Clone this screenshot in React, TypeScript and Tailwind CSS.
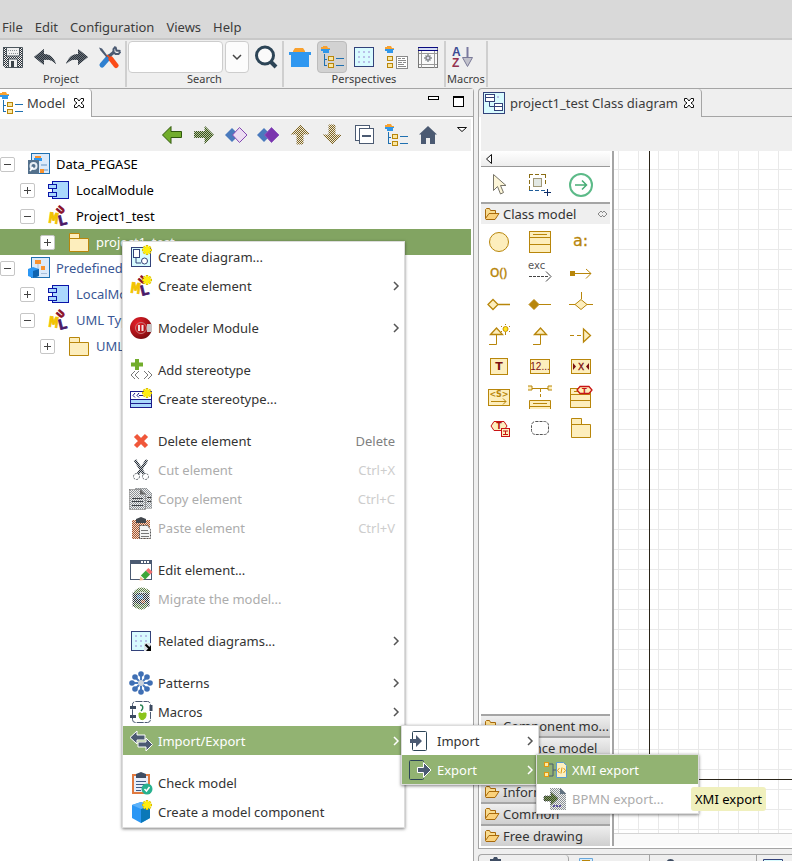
import React from "react";
import type { ReactNode } from "react";

const GOLD = "#b8860b";
const CREAM = "#fdeebd";
const SLATE = "#4b5a72";

/* ---------- icon helpers ---------- */

function Icon({ children, size = 24 }: { children: ReactNode; size?: number }) {
  return (
    <svg width={size} height={size} viewBox={`0 0 ${size} ${size}`} className="shrink-0" fill="none" aria-hidden="true">
      {children}
    </svg>
  );
}

function Dither({ id, color }: { id: string; color: string }) {
  return (
    <pattern id={id} width="2" height="2" patternUnits="userSpaceOnUse">
      <g shapeRendering="crispEdges">
        <rect width="1" height="1" fill={color} />
        <rect x="1" y="1" width="1" height="1" fill={color} />
      </g>
    </pattern>
  );
}

function Patterns() {
  return (
    <svg width="0" height="0" className="absolute" aria-hidden="true">
      <defs>
        <Dither id="dDark" color="#2b3138" />
        <Dither id="dGray" color="#8b9196" />
        <Dither id="dGreen" color="#37501c" />
        <Dither id="dBrown" color="#7d6426" />
        <Dither id="dRust" color="#a8562c" />
        <Dither id="dBlue" color="#2f6b9c" />
        <Dither id="dLeaf" color="#5f8040" />
        <radialGradient id="ball" cx="0.35" cy="0.3" r="0.8">
          <stop offset="0" stopColor="#e8202a" />
          <stop offset="0.6" stopColor="#a81218" />
          <stop offset="1" stopColor="#6d0a0e" />
        </radialGradient>
      </defs>
    </svg>
  );
}

function Star({ x, y }: { x: number; y: number }) {
  return (
    <g transform={`translate(${x} ${y})`}>
      <path d="M0-5V5M-5 0H5M-3.5-3.5L3.5 3.5M-3.5 3.5L3.5-3.5" stroke="#d9be00" strokeWidth="2.4" />
      <path d="M0-4V4M-4 0H4M-3-3L3 3M-3 3L3-3" stroke="#ffee10" strokeWidth="2" />
      <circle r="2.5" fill="#ffee10" />
    </g>
  );
}

function Pot({ x = 0, y = 0 }: { x?: number; y?: number }) {
  return (
    <g transform={`translate(${x} ${y})`}>
      <path d="M2 0h4l1 2h2v1H0V1h2z" fill="#f9a12e" />
      <path d="M0 3h9v1H8v3H2V5H0z" fill="#2f97ea" />
    </g>
  );
}

function TreeGlyph() {
  return (
    <Icon>
      <Pot x={1} y={1} />
      <g shapeRendering="crispEdges">
        <path d="M4.500 9v12M4 14.500h3M4 20.500h3M16 13.500h8M16 20.500h8" stroke="#1f70b0" />
        <rect x="8.500" y="11.500" width="5" height="4" fill="#fbe7a0" stroke={GOLD} />
        <rect x="8.500" y="18.500" width="5" height="4" fill="#fbe7a0" stroke={GOLD} />
      </g>
    </Icon>
  );
}

/* ---------- main toolbar icons ---------- */

const SaveIcon = () => (
  <Icon>
    <path fillRule="evenodd" fill="url(#dDark)" d="M2 2h20v21H4l-2-2zM6 3v8h12V3zM7 14v8h10v-8z" />
    <path d="M2.500 2.500h19v20h-17l-2-2zM5.500 3v8h13V3M7.500 22v-8h9v8" stroke="#4b555c" />
    <path d="M7 5.500h10M7 8.500h10" stroke="url(#dGray)" />
    <path d="M10 16h3v6h-3z" fill="#3a4248" />
  </Icon>
);
const UndoIcon = () => (
  <Icon>
    <path d="M1 12L11 4v5c6 0 10 4 12 10-4-4-7-5-12-4v5z" fill="#68717a" />
    <path d="M1 12L11 4v5c6 0 10 4 12 10-4-4-7-5-12-4v5z" fill="url(#dDark)" />
  </Icon>
);
const RedoIcon = () => (
  <Icon>
    <path d="M23 12L13 4v5C7 9 3 13 1 19c4-4 7-5 12-4v5z" fill="#68717a" />
    <path d="M23 12L13 4v5C7 9 3 13 1 19c4-4 7-5 12-4v5z" fill="url(#dDark)" />
  </Icon>
);
const ToolsIcon = () => (
  <Icon>
    <path d="M5 20l7-8" stroke="#2f80d0" strokeWidth="5" strokeLinecap="round" />
    <path d="M11 12l6-5" stroke={SLATE} strokeWidth="3" />
    <path d="M18.500 1.500l-2 2.500v3l2 2h3l2-2.500M18.500 2l1 3.500 4 .5" stroke={SLATE} strokeWidth="2" />
    <path d="M2 2.500l3 1 6 8-1.500 1-6-7z" fill={SLATE} />
    <path d="M14 14l5 6.500" stroke="#fb4b18" strokeWidth="5" strokeLinecap="round" />
    <path d="M10 10l4 4" stroke="#fb4b18" strokeWidth="1.500" />
  </Icon>
);
const SearchIcon = () => (
  <Icon>
    <path d="M16 16l6 6" stroke="#2c4456" strokeWidth="4" />
    <circle cx="11" cy="10.500" r="8.500" fill="#fafafa" stroke="#2c4456" strokeWidth="3" />
  </Icon>
);
const BasketIcon = () => (
  <Icon>
    <path d="M7 3h8l2 3v2H5V6z" fill="#f9a12e" />
    <path d="M1 7h22v3h-2v12H3V10H1z" fill="#2f97f0" />
  </Icon>
);
const GridIcon = ({ arrow = false }: { arrow?: boolean }) => (
  <Icon>
    <rect x="2.500" y="2.500" width="19" height="19" fill="#d8fbff" stroke="#33427a" />
    {[6, 11, 16].map((y) => [6, 11, 16].map((x) => <rect key={`${x}-${y}`} x={x} y={y} width="2" height="2" fill="#b9c1e8" />))}
    {arrow && (
      <>
        <path d="M15 14h7v8h-7z" fill="#dcdfe6" />
        <path d="M16.500 15.500l3.500 3.500" stroke="#000" strokeWidth="2" />
        <path d="M22 16v6h-5z" fill="#000" />
      </>
    )}
  </Icon>
);
const TreeDocIcon = () => (
  <Icon>
    <Pot x={1} y={1} />
    <rect x="3.500" y="11.500" width="5" height="4" fill="#fbe7a0" stroke={GOLD} />
    <rect x="3.500" y="18.500" width="5" height="4" fill="#fbe7a0" stroke={GOLD} />
    <rect x="12.500" y="11.500" width="11" height="12" fill="#fff" stroke="#8a8a8a" />
    <path d="M14 13.500h3m1 0h3M14 15.500h8M14 17.500h4m1 0h3M14 19.500h6M14 21.500h8" stroke="#8a8a8a" />
  </Icon>
);
const WindowIcon = () => (
  <Icon>
    <rect x="2.500" y="2.500" width="19" height="20" fill="#fafafa" stroke="#777" />
    <path d="M5.500 6v17M18.500 6v17M3 19.500h18M3 8.500h18" stroke="#999" />
    <path d="M3 3h18v2H3z" fill="#d4dcf4" />
    <path d="M2 2.500h20M2 5.500h20" stroke="#0b0b80" />
    <path d="M12 9v8M8 13h8M9.500 10.500l5 5M9.500 15.500l5-5" stroke="#8b9298" strokeWidth="1.500" />
    <circle cx="12" cy="13" r="2" fill="#dde" stroke="#777" />
  </Icon>
);
const SortIcon = () => (
  <Icon>
    <text x="2" y="11" fontSize="12" fontWeight="700" fontFamily="Liberation Sans" fill="#3b4b94">A</text>
    <text x="2" y="22" fontSize="12" fontWeight="700" fontFamily="Liberation Sans" fill="#93304e">Z</text>
    <path d="M17.500 2v11" stroke="#7a7aa0" strokeWidth="2" />
    <path d="M12.500 12.500h10l-5 9z" fill="#c2c2cc" stroke="#7a7a98" />
  </Icon>
);

/* ---------- model view icons ---------- */

const BackIcon = () => (
  <Icon>
    <path d="M2.500 12L11 3.500v5h10.500v6H11v6z" fill="#72ad2c" stroke="#31590d" />
  </Icon>
);
const ForwardIcon = () => (
  <Icon>
    <path d="M21.500 12L13 3.500v5H2.500v6H13v6z" fill="#b4c49b" />
    <path d="M21.500 12L13 3.500v5H2.500v6H13v6z" fill="url(#dGreen)" stroke="url(#dGreen)" />
  </Icon>
);
const DiamondsIcon = ({ filled = false }: { filled?: boolean }) => (
  <Icon>
    <path d="M1 12l7-7 7 7-7 7z" fill="#4a7abd" />
    <path d="M8.500 12L15.500 4.500 23 12l-7.500 7.500z" fill={filled ? "#7b35ae" : "#ecdcf2"} stroke={filled ? "#8f5ac0" : "#8247b2"} />
  </Icon>
);
const UpIcon = () => (
  <Icon>
    <path d="M12 2L3 11h6v10h6V11h6z" fill="#f0ead6" />
    <path d="M12 2L3 11h6v10h6V11h6z" fill="url(#dBrown)" stroke="url(#dBrown)" />
  </Icon>
);
const DownIcon = () => (
  <Icon>
    <path d="M12 21l-9-9h6V2h6v10h6z" fill="#f0ead6" />
    <path d="M12 21l-9-9h6V2h6v10h6z" fill="url(#dBrown)" stroke="url(#dBrown)" />
  </Icon>
);
const CollapseIcon = () => (
  <Icon>
    <rect x="3.500" y="2.500" width="14" height="15" fill="#fff" stroke={SLATE} />
    <rect x="7.500" y="5.500" width="14" height="15" fill="#fff" stroke={SLATE} />
    <path d="M10 13h9" stroke={SLATE} strokeWidth="2" />
  </Icon>
);
const HomeIcon = () => (
  <Icon>
    <path d="M12 3l9 8.500h-2V21h-5v-6h-4v6H5v-9.500H3z" fill={SLATE} />
  </Icon>
);
const ProjectIcon = ({ cube = false }: { cube?: boolean }) => (
  <Icon>
    <rect x="4.500" y="1.500" width="18" height="20" fill="#dceafa" stroke="#1f70b0" />
    {cube ? (
      <>
        <path d="M8 4h6v4H8zM14 10h4v4h-4z" fill="#f9922e" />
        <path d="M11 8v5M14 17.500h6" stroke="#a7bdd8" />
        <path d="M1 13l5-2 6 2v7l-6 2-5-2z" fill="#2b97f5" />
        <path d="M6 15l6-2v7l-6 2z" fill="#0e63b0" />
      </>
    ) : (
      <>
        <path d="M8 4h6v2H8zM13 17h4v4h-4z" fill="#f9922e" />
        <path d="M7 6h8v3H7z" fill="#2b97f0" />
        <path d="M14 13h6M17 18h4" stroke="#9fbfe0" strokeWidth="2" />
        <path d="M1 8h11v14H1z" fill="#53708c" />
        <circle cx="6.500" cy="14" r="3" fill="#53708c" stroke="#e8eef5" strokeWidth="2" />
        <path d="M6 15l-3 4" stroke="#fff" strokeWidth="1.500" />
      </>
    )}
  </Icon>
);
const ModuleIcon = () => (
  <Icon>
    <rect x="5.500" y="3.500" width="16" height="17" fill="#abd8fd" stroke="#0a14a8" />
    <rect x="1.500" y="6.500" width="8" height="4" fill="#abd8fd" stroke="#0a14a8" />
    <rect x="1.500" y="14.500" width="8" height="4" fill="#abd8fd" stroke="#0a14a8" />
  </Icon>
);
const UmlIcon = ({ star = false }: { star?: boolean }) => (
  <Icon>
    <g fontFamily="Liberation Mono" fontWeight="700" strokeWidth="0.800">
      <text x="10" y="10" fontSize="11" fill="#8c1028" stroke="#8c1028" transform="rotate(-50 13 6)">U</text>
      <text x="2" y="19" fontSize="16" fill="#f2c200" stroke="#f2c200" transform="rotate(8 6 14)">M</text>
      <text x="11" y="21" fontSize="15" fill="#4a1a68" stroke="#4a1a68" transform="rotate(-14 16 16)">L</text>
    </g>
    {star && <Star x={18} y={6} />}
  </Icon>
);
const FolderIcon = () => (
  <Icon>
    <path d="M2.500 21.500v-18h10v5h9v13z" fill={CREAM} stroke={GOLD} />
    <path d="M3 8.500h10" stroke={GOLD} />
  </Icon>
);

/* ---------- context menu icons ---------- */

const CreateDiagramIcon = () => (
  <Icon>
    <rect x="2.500" y="2.500" width="19" height="19" fill="#d8fbff" stroke="#33427a" />
    <path d="M7 12v6h5" stroke="#33427a" />
    <rect x="4.500" y="4.500" width="6" height="8" fill="#fff" stroke="#33427a" />
    <circle cx="15.500" cy="16" r="3" fill="#fff" stroke="#33427a" />
    <Star x={18} y={5} />
  </Icon>
);
const ModelerIcon = () => (
  <Icon>
    <circle cx="12" cy="12" r="11" fill="url(#ball)" />
    <path d="M18 8h5v8h-5z" fill="#c9c3c3" />
    <circle cx="12" cy="12" r="5.500" stroke="#c87a7c" />
    <path d="M9 9h2v6H9zM12.500 9h2v6h-2z" fill="#f2e2e2" />
  </Icon>
);
const AddStereoIcon = () => (
  <Icon>
    <path d="M8 1v11M2 6.500h12" stroke="#72ad2c" strokeWidth="4" />
    <path d="M6 13l-4 4 4 4M10 13l-4 4 4 4M15 13l4 4-4 4M19 13l4 4-4 4" stroke="#777" />
  </Icon>
);
const CreateStereoIcon = () => (
  <Icon>
    <rect x="1.500" y="4.500" width="21" height="16" fill="#fff" stroke="#1c1c8c" />
    <path d="M2 13h20v7H2z" fill="#a9d8fc" />
    <path d="M1 12.500h22M1 16.500h22" stroke="#1c1c8c" />
    <path d="M6 6l-2 2.500 2 2M10 6L8 8.500l2 2M10 8.500h4" stroke="#1c1c8c" />
    <Star x={18} y={6} />
  </Icon>
);
const DeleteIcon = () => (
  <Icon>
    <path d="M6.500 6.500l11 11M17.500 6.500l-11 11" stroke="#f0573a" strokeWidth="4.500" />
  </Icon>
);
const CutIcon = () => (
  <Icon>
    <path d="M6 2l9 14M18 2L9 16" stroke="#c3c8cd" strokeWidth="2.500" />
    <path d="M6 2l9 14M18 2L9 16" stroke="url(#dDark)" strokeWidth="3" />
    <circle cx="7.500" cy="18.500" r="3" stroke="#5b6166" strokeDasharray="2 1" />
    <circle cx="16.500" cy="18.500" r="3" stroke="#5b6166" strokeDasharray="2 1" />
  </Icon>
);
const CopyIcon = () => (
  <Icon>
    <path d="M6.500 1.500h11l5 5v15h-16z" fill="#f0f0f0" stroke="#888" strokeDasharray="1 1" />
    <path d="M6 1h12l5 5v15H6z" fill="url(#dGray)" />
    <path d="M18 10.500h4M18 14.500h4" stroke="#444" />
    <path d="M.5 2.500h11l5 5v15H.5z" fill="#f0f0f0" stroke="#555" strokeDasharray="1 1" />
    <path d="M1 3h10l5 5v14H1z" fill="url(#dGray)" />
    <path d="M11 2.500v5h5.500z" fill="#666" />
    <path d="M3 11.500h11M3 14.500h11M3 18.500h11" stroke="#3c4046" />
  </Icon>
);
const PasteIcon = () => (
  <Icon>
    <path d="M3 4h18v19H3z" fill="#efd8cb" />
    <path d="M3 4h18v19H3z" fill="url(#dRust)" />
    <path d="M7 3l5-2 5 2v4H7z" fill="#42474d" />
    <path d="M10.500 9.500h8l3 4v9h-11z" fill="#f4f4f4" stroke="#555" strokeDasharray="2 1" />
    <path d="M12 14.500h7M12 17.500h8M12 20.500h8" stroke="#777" />
  </Icon>
);
const EditIcon = () => (
  <Icon>
    <rect x="1.500" y="2.500" width="21" height="19" fill="#fff" stroke={SLATE} />
    <path d="M1 2h22v4H1z" fill={SLATE} />
    <path d="M12 4h2m1 0h2m1 0h2" stroke="#fff" strokeWidth="2" />
    <path d="M14 19.500l5-5" stroke="#3da63a" strokeWidth="6" />
    <path d="M19 14.500l2.500-2.500" stroke="#f0706e" strokeWidth="6" />
    <path d="M10.500 22.500l1-4 3.500 3.500z" fill="#f4b98c" />
  </Icon>
);
const MigrateIcon = () => (
  <Icon>
    <path d="M5 4c4-4 10-4 14 0v15c-4 4-10 4-14 0z" fill="#dfe6e8" />
    <path d="M5 6h14v13c-4 4-10 4-14 0z" fill="url(#dDark)" />
    <path d="M4 6c4-7 12-7 17-2l-1 4c-4-4-10-4-14 0zM19 18c-4 7-10 5-15 1l1-5c3 4 9 5 13 1z" fill="url(#dLeaf)" />
    <path d="M4.500 5.500v14M19.500 5.500v14" stroke="url(#dDark)" strokeWidth="2" />
    <path d="M8 8h6v4H8z" fill="url(#dBlue)" />
    <path d="M12 13h4v3h-4z" fill="url(#dRust)" />
  </Icon>
);
const PatternsIcon = () => (
  <Icon>
    <path d="M12 2v20M2 12h20M5 5l14 14M19 5L5 19" stroke="#4a7abd" strokeWidth="2" />
    {[[12, 3], [12, 21], [3, 12], [21, 12], [6, 6], [18, 6], [6, 18], [18, 18]].map(([x, y]) => (
      <circle key={`${x}-${y}`} cx={x} cy={y} r="2.800" fill="#3f6fb4" />
    ))}
    <circle cx="12" cy="12" r="3" fill="#ccd3dd" />
  </Icon>
);
const MacrosIcon = () => (
  <Icon>
    <rect x="3.500" y="1.500" width="18" height="21" rx="3" fill="#fff" stroke={SLATE} strokeDasharray="7 1" />
    <path d="M1 7.500h6M1 16.500h6M22 5v6" stroke="#3c4a60" strokeWidth="3" />
    <path d="M11 5c3 0 4 3 1 6" stroke="#268050" strokeWidth="1.500" />
    <path d="M10 13h2l1 1 1-1h3c1 8-7 9-7 2z" fill="#8bc51c" stroke="#8bc51c" />
  </Icon>
);
const TransferIcon = () => (
  <Icon>
    <path d="M1 8.500L8 2v4h8v5H8v4z" fill={SLATE} stroke="#fff" />
    <path d="M23.500 15.500L17 9v4h-8v5h8v4z" fill={SLATE} stroke="#fff" />
  </Icon>
);
const CheckModelIcon = () => (
  <Icon>
    <rect x="4" y="4" width="16" height="18" fill="#e7eefb" stroke="#e07a40" strokeWidth="2" />
    <path d="M7 3l5-2 5 2v4H7z" fill="#3f4d63" />
    <path d="M7 10.500h10M7 13.500h9M7 16.500h6M7 19.500h5" stroke="#3f5d85" />
    <circle cx="18" cy="18" r="5.500" fill="#28b18f" />
    <path d="M15.500 18l2 2 3-4" stroke="#fff" strokeWidth="1.500" />
  </Icon>
);
const ComponentIcon = () => (
  <Icon>
    <path d="M3 5l9-3 9 3v13l-9 5-9-5z" fill="#2b97f5" />
    <path d="M12 9l9-4v13l-9 5z" fill="#0b78b8" />
    <path d="M3 5l9-3 9 3-9 4z" fill="#5bb2fa" />
    <Star x={18} y={5} />
  </Icon>
);
const ImportIcon = () => (
  <Icon>
    <rect x="4.500" y="2.500" width="14" height="19" rx="1" fill="#fff" stroke="#2c4456" />
    <path d="M2 10h6V6l6 6-6 6v-4H2z" fill={SLATE} />
  </Icon>
);
const ExportIcon = () => (
  <Icon>
    <rect x="1.500" y="2.500" width="14" height="19" rx="1" stroke="#2c4456" />
    <path d="M9.500 9.500h6v-5l7.500 7.500-7.500 7.500v-5h-6z" fill={SLATE} stroke="#fff" />
  </Icon>
);
const XmiIcon = () => (
  <Icon>
    <path d="M6 6h4v12H6M10 12h3" stroke={SLATE} />
    <rect x="1.500" y="4.500" width="4" height="4" fill="#ffe9a0" stroke="#e09a10" />
    <rect x="1.500" y="14.500" width="4" height="4" fill="#ffe9a0" stroke="#e09a10" />
    <path d="M13.500 4.500h7l3 3v12h-10z" fill="#fdf0c0" stroke="#5a9ad0" />
    <path d="M16.500 10l-2 2.500 2 2.500M20.500 10l2 2.500-2 2.500M19 9.500l-1 6" stroke="#e09a10" />
  </Icon>
);
const BpmnIcon = () => (
  <Icon>
    <path d="M7 1h11l5 5v17H7z" fill="#f0f0f0" />
    <path d="M7 1h11l5 5v17H7z" fill="url(#dGray)" />
    <path d="M17 1v6h6z" fill="#617282" />
    <path d="M1 9h7V5l7 6.500L8 18v-4H1z" fill="#86966c" />
    <path d="M1 9h7V5l7 6.500L8 18v-4H1z" fill="url(#dGreen)" stroke="url(#dDark)" />
    <path d="M10 19h9" stroke="#5c4fa0" strokeWidth="2" strokeDasharray="2 1" />
  </Icon>
);

/* ---------- editor and palette icons ---------- */

const ClassDiagramIcon = () => (
  <Icon>
    <rect x="1.500" y="1.500" width="21" height="21" fill="#d8fbff" stroke="#33427a" />
    <path d="M7.500 10v5.500h5" stroke="#33427a" />
    <rect x="3.500" y="3.500" width="9" height="7" fill="#fff" stroke="#33427a" />
    <rect x="12.500" y="12.500" width="8" height="7" fill="#fff" stroke="#33427a" />
    <path d="M3 6.500h9M12 15.500h8" stroke="#33427a" />
    <path d="M15 5h2v2h-2z" fill="#b9c1e8" />
  </Icon>
);
const CloseIcon = () => (
  <svg width="12" height="12" viewBox="0 0 12 12" className="shrink-0" fill="#fff" stroke="#111" aria-hidden="true">
    <path d="M1.500 1.500h2.500l2 2.500 2-2.500h2.500v2.500L8 6l2.500 2v2.500H8L6 8l-2 2.500H1.500V8L4 6 1.500 4z" />
  </svg>
);

const PointerIcon = () => (
  <Icon>
    <path d="M6.500 1.500v16l4-4 3 7.500 3-1.500-3-7h5.500z" fill="#fdf6d8" stroke="#777468" />
  </Icon>
);
const MarqueeIcon = () => (
  <Icon>
    <path d="M1 1.500h17M1.500 1v16M17.500 1v12" stroke="#8a6d14" strokeDasharray="4 2" />
    <path d="M1 17.500h16" stroke="#1f5c98" strokeDasharray="4 2" />
    <rect x="5.500" y="5.500" width="8" height="8" fill="#e2e8e4" stroke="#a09878" />
    <path d="M19.500 16v7M16 19.500h7" stroke="#0b2a66" />
  </Icon>
);
const LinkIcon = () => (
  <Icon>
    <circle cx="12" cy="12" r="11" stroke="#5cba88" strokeWidth="2" />
    <path d="M6 12h11M13 7.500l4.500 4.500-4.500 4.500" stroke="#48ad76" strokeWidth="1.500" />
  </Icon>
);

const paletteIcons: { name: string; art: ReactNode }[] = [
  { name: "Interface", art: <circle cx="12" cy="12" r="9.500" fill={CREAM} stroke={GOLD} /> },
  {
    name: "Class",
    art: (
      <g stroke={GOLD}>
        <rect x="1.500" y="1.500" width="21" height="21" fill={CREAM} />
        <path d="M5 4.500h14M2 7.500h20M2 14.500h20" />
      </g>
    ),
  },
  { name: "Attribute", art: <text x="4" y="16" fontSize="16" fontFamily="DejaVu Sans" fill={GOLD} stroke={GOLD} strokeWidth="0.300">a:</text> },
  { name: "Operation", art: <text x="3" y="16" fontSize="12" fontFamily="Noto Sans" fontWeight="500" fill={GOLD} stroke={GOLD} strokeWidth="0.300">O()</text> },
  {
    name: "Exception",
    art: (
      <g stroke="#444">
        <text x="0" y="8" fontSize="10" fontFamily="DejaVu Sans" fill="#555" stroke="none">exc</text>
        <path d="M1 15.500h19" strokeDasharray="3 1" />
        <path d="M18 10.500l5 5-5 5" />
      </g>
    ),
  },
  {
    name: "Association",
    art: (
      <g stroke={GOLD}>
        <rect x="1.500" y="10.500" width="4" height="4" fill={GOLD} />
        <path d="M6 12.500h16M17 8l5 4.500-5 5" />
      </g>
    ),
  },
  { name: "Aggregation", art: <path d="M1 12.500l5-5 5 5-5 5zM11 12.500h12" fill={CREAM} stroke={GOLD} strokeWidth="1.300" /> },
  { name: "Composition", art: <path d="M1 12.500l5-5 5 5-5 5zM11 12.500h12" fill={GOLD} stroke={GOLD} /> },
  { name: "N-ary association", art: <path d="M0 12.500h6l6-5 6 5-6 5-6-5M18 12.500h6M12.500 0v7" fill={CREAM} stroke={GOLD} /> },
  {
    name: "Smart inheritance",
    art: (
      <g stroke={GOLD}>
        <path d="M9.500 11v10.500H2" />
        <path d="M3.500 11.500l6-6.500 6 6.500z" fill={CREAM} strokeWidth="1.300" />
        <circle cx="18.500" cy="6" r="2.500" fill="#ffe820" stroke="#c8900b" />
        <path d="M18.500 9v3M14 3l1 1M23 3l-1 1M18.500 1v1M14 9l1-1M23 9l-1-1" />
      </g>
    ),
  },
  {
    name: "Generalization",
    art: (
      <g stroke={GOLD}>
        <path d="M12.500 11v10.500H5" />
        <path d="M6.500 11.500l6-6.500 6 6.500z" fill={CREAM} strokeWidth="1.300" />
      </g>
    ),
  },
  {
    name: "Realization",
    art: (
      <g stroke={GOLD}>
        <path d="M1 12.500h12" strokeDasharray="4 3" />
        <path d="M14.500 6l7 6.500-7 6.500z" fill={CREAM} strokeWidth="1.300" />
      </g>
    ),
  },
  {
    name: "Template parameter",
    art: (
      <g>
        <rect x="3.500" y="4.500" width="17" height="16" fill={CREAM} stroke={GOLD} />
        <text x="12" y="16" fontSize="11" fontWeight="700" textAnchor="middle" fontFamily="DejaVu Sans" fill="#7c1010">T</text>
      </g>
    ),
  },
  {
    name: "Enumeration literal",
    art: (
      <g>
        <rect x="2.500" y="5.500" width="19" height="14" fill={CREAM} stroke={GOLD} />
        <text x="12" y="16" fontSize="10" textAnchor="middle" fontFamily="Liberation Sans" fill="#7c1010">12...</text>
      </g>
    ),
  },
  {
    name: "Enumeration",
    art: (
      <g>
        <rect x="2.500" y="5.500" width="19" height="14" fill={CREAM} stroke={GOLD} />
        <text x="12" y="16" fontSize="9" textAnchor="middle" fontFamily="DejaVu Sans" fill="#7c1010" stroke="#7c1010" strokeWidth="0.300">X</text>
        <path d="M4 9l3 3.500-3 3.500zM20 9l-3 3.500 3 3.500z" fill="#7c1010" />
      </g>
    ),
  },
  {
    name: "Signal",
    art: (
      <g stroke={GOLD}>
        <rect x="1.500" y="4.500" width="21" height="16" fill={CREAM} />
        <text x="12" y="12" fontSize="8" fontWeight="700" textAnchor="middle" fontFamily="DejaVu Sans" fill={GOLD} stroke="none">&lt;S&gt;</text>
        <path d="M4 16.500h15M16 13.500l3 3-3 3" />
      </g>
    ),
  },
  {
    name: "Association class",
    art: (
      <g stroke={GOLD}>
        <path d="M0 3.500h24" />
        <path d="M0 1h4v4H0M24 1h-4v4h4" fill={CREAM} />
        <path d="M12.500 4v10" strokeDasharray="3 2" />
        <path d="M1.500 24v-8.500h21V24" fill={CREAM} />
        <path d="M5 18.500h14M2 21.500h20" />
      </g>
    ),
  },
  {
    name: "Parameterized class",
    art: (
      <g stroke={GOLD}>
        <rect x="1.500" y="3.500" width="20" height="19" fill={CREAM} />
        <path d="M2 9.500h20M2 15.500h20M5 6.500h4" />
        <path d="M11 1.500h9l3 3.500-3 3.500h-9L8 5z" fill={CREAM} stroke="#c81414" strokeWidth="1.300" />
        <text x="15.500" y="8" fontSize="7" fontWeight="700" textAnchor="middle" fontFamily="DejaVu Sans" fill="#c81414" stroke="none">T</text>
      </g>
    ),
  },
  {
    name: "Template binding",
    art: (
      <g stroke="#c81414">
        <path d="M7 5.500h10l3 4.500-3 4.500H7L4 10z" fill={CREAM} />
        <text x="12" y="13" fontSize="8" fontWeight="700" textAnchor="middle" fontFamily="DejaVu Sans" fill="#b01010" stroke="none">T</text>
        <rect x="14.500" y="12.500" width="8" height="8" fill={CREAM} />
        <path d="M16 15h5M16 18.500h5M18.500 15v3.500" />
      </g>
    ),
  },
  { name: "Collaboration", art: <rect x="3.500" y="5.500" width="17" height="13" rx="4" fill="#fff" stroke="#555" strokeDasharray="3 1" /> },
  {
    name: "Package",
    art: (
      <g stroke={GOLD}>
        <path d="M2.500 21.500v-19h10v6h9v13z" fill={CREAM} />
        <path d="M3 8.500h10" />
      </g>
    ),
  },
];

const DrawerIcon = () => (
  <svg width="16" height="14" viewBox="0 0 16 14" className="shrink-0" fill="none" stroke="#a86a0c" strokeLinejoin="round" aria-hidden="true">
    <path d="M1.500 11.500v-9l1-1h3l1 2h5v3" fill="#f9dc90" />
    <path d="M1.500 11.500l3.500-5h10l-4 6H2z" fill="#fbd27c" />
  </svg>
);

/* ---------- parts ---------- */

function ToolButton({ label, active = false, children }: { label: string; active?: boolean; children: ReactNode }) {
  return (
    <button
      type="button"
      aria-label={label}
      className={`flex h-8 w-[30px] items-center justify-center rounded-sm border ${active ? "border-[#bcbcbc] bg-[#d2d2d2]" : "border-transparent"}`}
    >
      {children}
    </button>
  );
}

function ToolGroup({ label, children }: { label: string; children: ReactNode }) {
  return (
    <section aria-label={label} className="flex flex-col border-r-2 border-[#cfcfcf] px-px">
      <div className="flex h-8 items-center gap-0.5">{children}</div>
      <div className="text-center text-[11px] leading-3">{label}</div>
    </section>
  );
}

type TreeRow = { label: string; level: number; open: boolean; icon: ReactNode; tone: string; selected?: boolean };
const tree: TreeRow[] = [
  { label: "Data_PEGASE", level: 0, open: true, icon: <ProjectIcon />, tone: "text-black" },
  { label: "LocalModule", level: 1, open: false, icon: <ModuleIcon />, tone: "text-black" },
  { label: "Project1_test", level: 1, open: true, icon: <UmlIcon />, tone: "text-black" },
  { label: "project1_test", level: 2, open: false, icon: <FolderIcon />, tone: "text-white", selected: true },
  { label: "Predefined Types", level: 0, open: true, icon: <ProjectIcon cube />, tone: "text-[#3a5795]" },
  { label: "LocalModule", level: 1, open: false, icon: <ModuleIcon />, tone: "text-[#3a5795]" },
  { label: "UML Types", level: 1, open: true, icon: <UmlIcon />, tone: "text-[#3a5795]" },
  { label: "UML Types", level: 2, open: false, icon: <FolderIcon />, tone: "text-[#3a5795]" },
];
const indent = ["pl-0", "pl-5", "pl-10"];

function Chevron({ className = "" }: { className?: string }) {
  return (
    <svg width="8" height="10" viewBox="0 0 8 10" fill="none" stroke="currentColor" strokeWidth="1.500" className={`shrink-0 ${className}`} aria-hidden="true">
      <path d="M2 1l4 4-4 4" />
    </svg>
  );
}

type ItemProps = { icon: ReactNode; label: string; keys?: string; sub?: boolean; disabled?: boolean; active?: boolean; children?: ReactNode };
function Item({ icon, label, keys, sub, disabled, active, children }: ItemProps) {
  const tone = active ? "bg-[#92b372] text-white" : disabled ? "text-[#acacac]" : "text-[#333]";
  return (
    <li role="none" className="relative">
      <button type="button" role="menuitem" disabled={disabled} className={`flex h-[29px] w-full items-center gap-[5px] pr-1 pl-1.5 text-left whitespace-nowrap ${tone}`}>
        {icon}
        <span className="grow">{label}</span>
        {keys && <span className={`pr-[5px] ${disabled ? "text-[#cdcdcd]" : "text-[#808080]"}`}>{keys}</span>}
        {sub && <Chevron className={active ? "" : "text-[#555]"} />}
      </button>
      {children}
    </li>
  );
}
const Gap = () => <li role="separator" className="h-[13px]" />;
const menuBox = "border border-[#dcdcdc] bg-white shadow-[0_1px_3px_rgba(0,0,0,0.5)]";

function ContextMenu() {
  return (
    <ul role="menu" aria-label="Element actions" className={`absolute top-[241px] left-[122px] w-[283px] pb-px ${menuBox}`}>
      <Item icon={<CreateDiagramIcon />} label="Create diagram..." />
      <Item icon={<UmlIcon star />} label="Create element" sub />
      <Gap />
      <Item icon={<ModelerIcon />} label="Modeler Module" sub />
      <Gap />
      <Item icon={<AddStereoIcon />} label="Add stereotype" />
      <Item icon={<CreateStereoIcon />} label="Create stereotype..." />
      <Gap />
      <Item icon={<DeleteIcon />} label="Delete element" keys="Delete" />
      <Item icon={<CutIcon />} label="Cut element" keys="Ctrl+X" disabled />
      <Item icon={<CopyIcon />} label="Copy element" keys="Ctrl+C" disabled />
      <Item icon={<PasteIcon />} label="Paste element" keys="Ctrl+V" disabled />
      <Gap />
      <Item icon={<EditIcon />} label="Edit element..." />
      <Item icon={<MigrateIcon />} label="Migrate the model..." disabled />
      <Gap />
      <Item icon={<GridIcon arrow />} label="Related diagrams..." sub />
      <Gap />
      <Item icon={<PatternsIcon />} label="Patterns" sub />
      <Item icon={<MacrosIcon />} label="Macros" sub />
      <Item icon={<TransferIcon />} label="Import/Export" sub active>
        <ul role="menu" aria-label="Import/Export" className={`absolute -top-px left-[278px] w-[138px] ${menuBox}`}>
          <Item icon={<ImportIcon />} label="Import" sub />
          <Item icon={<ExportIcon />} label="Export" sub active>
            <ul role="menu" aria-label="Export" className={`absolute -top-px left-[134px] w-[163px] ${menuBox}`}>
              <Item icon={<XmiIcon />} label="XMI export" active />
              <Item icon={<BpmnIcon />} label="BPMN export..." disabled />
            </ul>
            <div role="tooltip" className="absolute top-8 left-[289px] rounded-[3px] bg-[#f0f0bd] px-1 py-0.5 leading-5 whitespace-nowrap text-black">
              XMI export
            </div>
          </Item>
        </ul>
      </Item>
      <Gap />
      <Item icon={<CheckModelIcon />} label="Check model" />
      <Item icon={<ComponentIcon />} label="Create a model component" />
    </ul>
  );
}

function ModelView() {
  return (
    <section aria-label="Model" className="flex min-w-0 flex-col rounded-tr border-t border-r border-[#a5a5a5] bg-white">
      <div className="flex h-7 bg-[#efefef]">
        <div className="flex w-[92px] items-center gap-1 rounded-tr border-r border-[#a5a5a5] bg-white">
          <span className="-ml-px"><TreeGlyph /></span>
          <span className="grow">Model</span>
          <button type="button" aria-label="Close Model" className="mr-1.5"><CloseIcon /></button>
        </div>
        <div className="flex grow items-start justify-end gap-3.5 border-b border-[#a5a5a5] pt-[7px] pr-[9px]">
          <button type="button" aria-label="Minimize" className="h-1 w-[11px] border border-black bg-white" />
          <button type="button" aria-label="Maximize" className="h-[11px] w-[11px] border border-t-2 border-black bg-white" />
        </div>
      </div>
      <div className="mt-0.5 mr-0.5 flex h-8 shrink-0 items-center justify-end gap-2 bg-[#efefef] pr-[3px]">
        <button type="button" aria-label="Back"><BackIcon /></button>
        <button type="button" aria-label="Forward"><ForwardIcon /></button>
        <button type="button" aria-label="Show related elements"><DiamondsIcon /></button>
        <button type="button" aria-label="Select related elements"><DiamondsIcon filled /></button>
        <button type="button" aria-label="Move up"><UpIcon /></button>
        <button type="button" aria-label="Move down"><DownIcon /></button>
        <button type="button" aria-label="Collapse all"><CollapseIcon /></button>
        <button type="button" aria-label="Show tree"><TreeGlyph /></button>
        <button type="button" aria-label="Home"><HomeIcon /></button>
        <button type="button" aria-label="View menu" className="mb-3 ml-2">
          <svg width="12" height="7" viewBox="0 0 12 7" fill="#fff" stroke="#111" aria-hidden="true"><path d="M1.500 1.500h9L6 5.500z" /></svg>
        </button>
      </div>
      <ul role="tree" aria-label="Model tree" className="mr-0.5">
        {tree.map((r, i) => (
          <li key={i} role="treeitem" aria-selected={!!r.selected} aria-expanded={r.open} className={`flex h-[26px] items-center ${indent[r.level]} ${r.tone} ${r.selected ? "bg-[#82a462]" : ""}`}>
            <button type="button" aria-label={r.open ? `Collapse ${r.label}` : `Expand ${r.label}`} className="flex h-[15px] w-[15px] items-center justify-center rounded-xs border border-[#c6c6c6] bg-white">
              <svg width="7" height="7" viewBox="0 0 7 7" stroke="#444" aria-hidden="true"><path d={r.open ? "M0 3.500h7" : "M0 3.500h7M3.500 0v7"} /></svg>
            </button>
            <span className="mr-[5px] ml-3">{r.icon}</span>
            {r.label}
          </li>
        ))}
      </ul>
    </section>
  );
}

function Drawer({ label, open = false }: { label: string; open?: boolean }) {
  return (
    <button
      type="button"
      aria-expanded={open}
      className={`flex h-[22px] w-full shrink-0 items-center gap-[3px] border-t-2 border-[#a5a5a5] pr-0.5 pl-[3px] text-left whitespace-nowrap text-[#333] ${open ? "bg-[#efefef]" : "bg-linear-to-b from-[#efefef] to-[#cfcfcf]"}`}
    >
      {label && <DrawerIcon />}
      <span className="grow">{label}</span>
      {open && (
        <svg width="11" height="8" viewBox="0 0 11 8" fill="none" stroke="#888" aria-hidden="true"><path d="M4 1L1 4l3 3 2-2M7 1l3 3-3 3-2-2M4 1l2 2M7 1L5 3" /></svg>
      )}
    </button>
  );
}

function Editor() {
  return (
    <div className="flex min-h-0 min-w-0 flex-col pl-1">
      <section aria-label="Class diagram editor" className="flex min-h-0 grow flex-col rounded-tl border-t border-b border-l border-[#a5a5a5]">
        <div className="flex h-7 shrink-0">
          <div className="flex w-[223px] items-center gap-1 rounded-tr border-r border-[#a5a5a5] pl-[3px]">
            <ClassDiagramIcon />
            <span className="grow whitespace-nowrap">project1_test Class diagram</span>
            <button type="button" aria-label="Close diagram" className="mr-1.5"><CloseIcon /></button>
          </div>
          <div className="grow border-b border-[#a5a5a5]" />
        </div>
        <div className="flex min-h-0 grow border-b-2 border-l-2 border-white">
          <div className="flex min-w-0 grow flex-col">
            <div className="h-[34px] shrink-0" />
            <div className="flex min-h-0 grow bg-white">
              <aside aria-label="Palette" className="flex w-[133px] shrink-0 flex-col border-r-2 border-[#a5a5a5] pr-0.5">
                <button type="button" aria-label="Hide palette" className="flex h-4 w-full shrink-0 items-center border-b border-[#999] bg-linear-to-b from-white to-[#ededed] pl-1">
                  <svg width="8" height="12" viewBox="0 0 8 12" fill="#fff" stroke="#111" aria-hidden="true"><path d="M6.500 1.500v9L1.500 6z" /></svg>
                </button>
                <div className="grid h-[35px] shrink-0 grid-cols-[36px_46px_36px] place-items-center">
                  <button type="button" aria-label="Select"><PointerIcon /></button>
                  <button type="button" aria-label="Marquee"><MarqueeIcon /></button>
                  <button type="button" aria-label="Link"><LinkIcon /></button>
                </div>
                <Drawer label="Class model" open />
                <div className="grid auto-rows-[31px] grid-cols-[36px_46px_36px] place-items-center pt-0.5">
                  {paletteIcons.map((p) => (
                    <button key={p.name} type="button" aria-label={p.name}><Icon>{p.art}</Icon></button>
                  ))}
                </div>
                <div className="mt-auto">
                  <Drawer label="Component mo..." />
                  <Drawer label="Instance model" />
                  <Drawer label="" />
                  <Drawer label="Information flow" />
                  <Drawer label="Common" />
                  <Drawer label="Free drawing" />
                </div>
              </aside>
              <div className="flex min-w-0 grow flex-col">
                <div className="relative grow overflow-hidden bg-[linear-gradient(to_right,#e9e9e9_1px,transparent_1px),linear-gradient(to_bottom,#e9e9e9_1px,transparent_1px)] bg-[length:20px_20px] bg-[position:4px_18px]">
                  <div className="absolute top-0 right-0 bottom-[53px] left-[35px] border-b border-l border-[#2a2418]" />
                </div>
                <div className="h-[13px] shrink-0 border-t border-[#d4d4d4] bg-[#fafafa]" />
              </div>
            </div>
          </div>
        </div>
      </section>
      <section aria-label="Views" className="mt-[5px] flex h-[7px] shrink-0 overflow-hidden rounded-tl border-t border-l border-[#a5a5a5]">
        <div className="w-[90px] shrink-0 rounded-tr border-r border-[#a5a5a5] pl-[11px]">
          <svg width="12" height="6" viewBox="0 0 12 6" aria-hidden="true"><path d="M0 6V4h3l1-2h3l1 2h3v2z" fill="#3f4d63" /></svg>
        </div>
        <div className="w-[81px] shrink-0 border-r border-[#a5a5a5] pl-2.5">
          <svg width="14" height="6" viewBox="0 0 14 6" aria-hidden="true"><path d="M.5 6V3.500h13V6" fill="#d8ecfb" stroke="#69a8dc" /><path d="M3 5h8v1H3z" fill={GOLD} /></svg>
        </div>
        <div className="w-[107px] shrink-0 border-r border-[#a5a5a5] pl-4">
          <svg width="9" height="6" viewBox="0 0 9 6" aria-hidden="true"><circle cx="4.500" cy="8" r="4" fill="#3f4d63" /></svg>
        </div>
        <div className="pl-1.5">
          <svg width="20" height="6" viewBox="0 0 20 6" aria-hidden="true"><path d="M.5 6V4.500h19V6" fill="#d8fbff" stroke="#33427a" /></svg>
        </div>
      </section>
    </div>
  );
}

export default function App() {
  return (
    <div className="relative flex h-screen flex-col overflow-hidden bg-[#efefef] font-['Noto_Sans',sans-serif] text-[13px] leading-5 text-[#3c3c3c]">
      <Patterns />
      <nav aria-label="Main menu" className="flex h-10 shrink-0 items-end gap-3 border-b-2 border-[#c8c8c8] bg-[#d9d9d9] pb-px pl-0.5">
        <button type="button">File</button>
        <button type="button">Edit</button>
        <button type="button">Configuration</button>
        <button type="button">Views</button>
        <button type="button">Help</button>
      </nav>
      <div role="toolbar" aria-label="Tools" className="flex h-12 shrink-0 pt-px pb-px">
        <div className="-ml-[3px] flex">
          <ToolGroup label="Project">
            <ToolButton label="Save"><SaveIcon /></ToolButton>
            <ToolButton label="Undo"><UndoIcon /></ToolButton>
            <ToolButton label="Redo"><RedoIcon /></ToolButton>
            <ToolButton label="Configure"><ToolsIcon /></ToolButton>
          </ToolGroup>
        </div>
        <ToolGroup label="Search">
          <input aria-label="Search text" className="h-8 w-[95px] rounded-sm border border-[#cdcdcd] bg-white px-1.5" />
          <button type="button" aria-label="Search history" className="flex h-8 w-6 items-center justify-center rounded-sm border border-[#cdcdcd] bg-[#fcfcfc]">
            <svg width="10" height="7" viewBox="0 0 10 7" fill="none" stroke="#444" strokeWidth="1.500" aria-hidden="true"><path d="M1 1l4 4 4-4" /></svg>
          </button>
          <ToolButton label="Search"><SearchIcon /></ToolButton>
        </ToolGroup>
        <ToolGroup label="Perspectives">
          <ToolButton label="Workspace"><BasketIcon /></ToolButton>
          <ToolButton label="Model" active><TreeGlyph /></ToolButton>
          <ToolButton label="Diagram"><GridIcon /></ToolButton>
          <ToolButton label="Documentation"><TreeDocIcon /></ToolButton>
          <ToolButton label="Settings"><WindowIcon /></ToolButton>
        </ToolGroup>
        <ToolGroup label="Macros">
          <ToolButton label="Macros"><SortIcon /></ToolButton>
        </ToolGroup>
      </div>
      <main className="grid min-h-0 grow grid-cols-[79fr_53fr] grid-rows-1">
        <ModelView />
        <Editor />
      </main>
      <ContextMenu />
    </div>
  );
}
